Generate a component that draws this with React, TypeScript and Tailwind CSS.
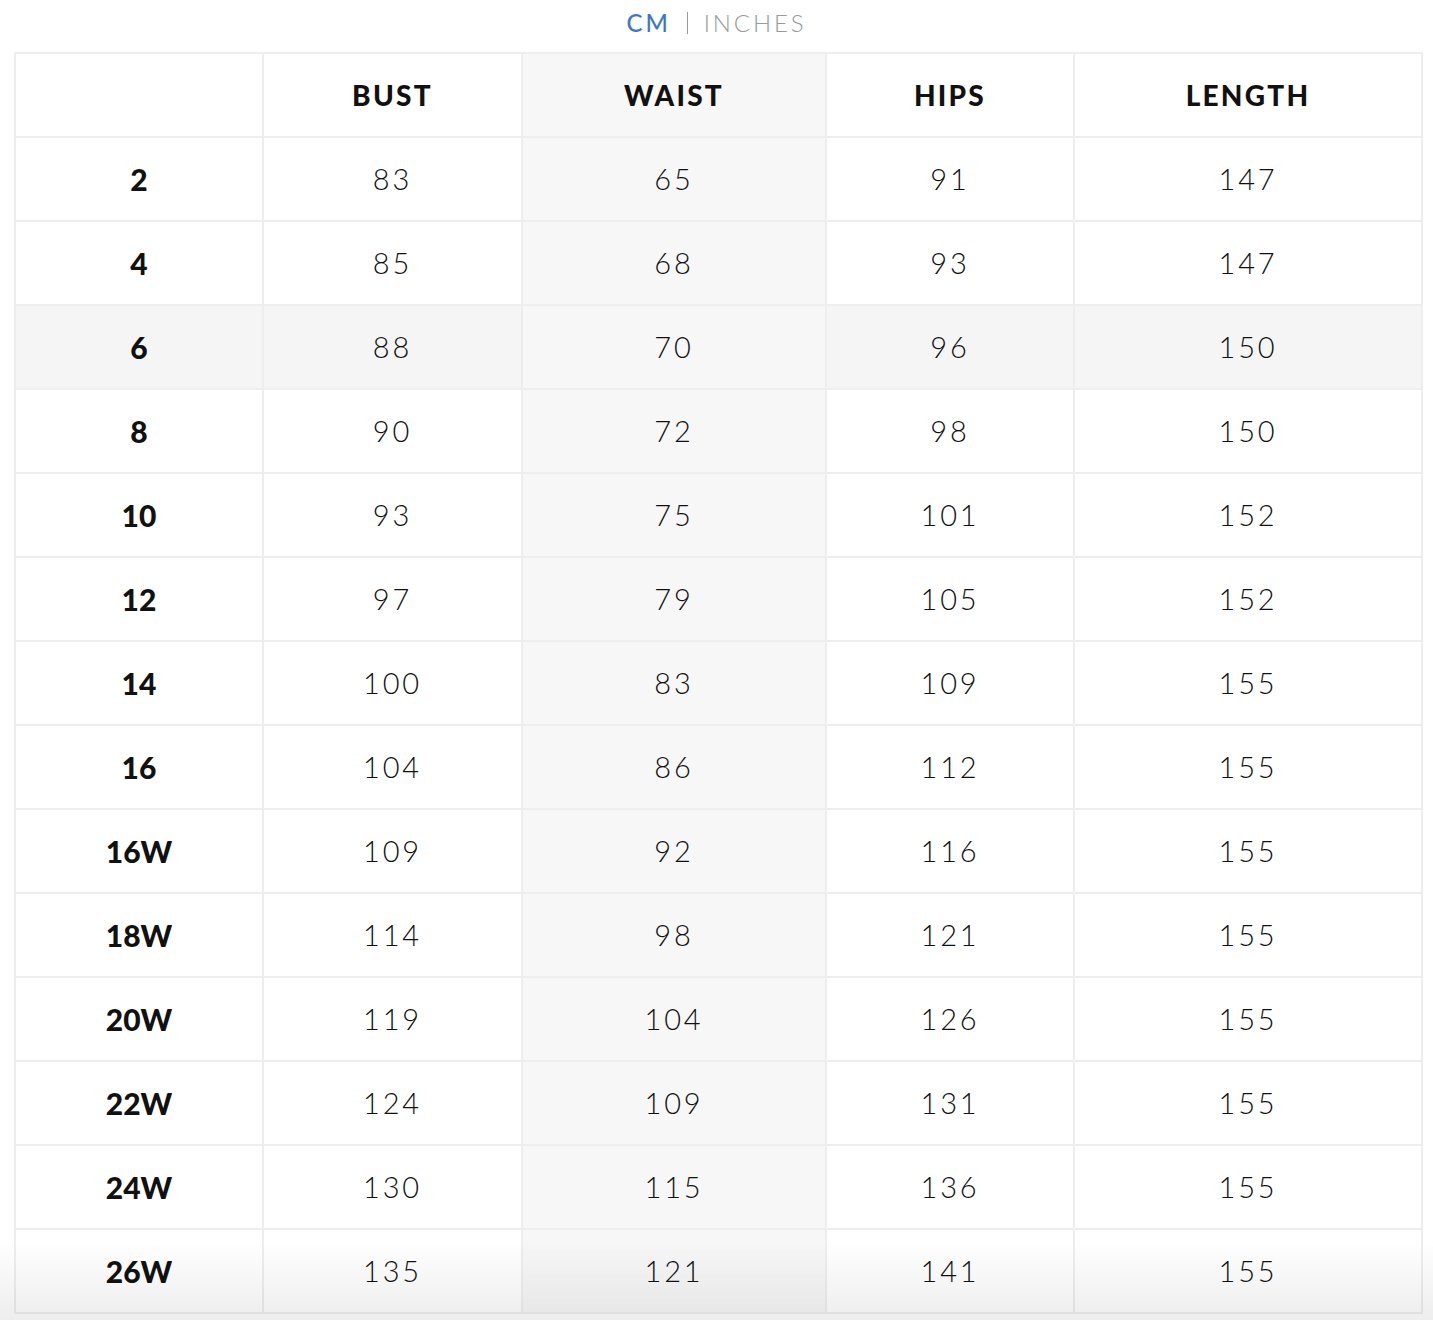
const columns = ['BUST', 'WAIST', 'HIPS', 'LENGTH']

const rows: [string, number, number, number, number][] = [
  ['2', 83, 65, 91, 147],
  ['4', 85, 68, 93, 147],
  ['6', 88, 70, 96, 150],
  ['8', 90, 72, 98, 150],
  ['10', 93, 75, 101, 152],
  ['12', 97, 79, 105, 152],
  ['14', 100, 83, 109, 155],
  ['16', 104, 86, 112, 155],
  ['16W', 109, 92, 116, 155],
  ['18W', 114, 98, 121, 155],
  ['20W', 119, 104, 126, 155],
  ['22W', 124, 109, 131, 155],
  ['24W', 130, 115, 136, 155],
  ['26W', 135, 121, 141, 155],
]

const widths = ['w-[248px]', 'w-[259px]', 'w-[304px]', 'w-[248px]', 'w-[348px]']

export default function App() {
  return (
    <div className="relative h-[1320px] w-[1433px] overflow-hidden bg-white font-['Lato',sans-serif] text-[#111]">
      <div className="flex h-[42px] items-center justify-center gap-4 pt-1 text-[24px] tracking-[0.12em]">
        <span className="font-medium text-[#3f78c0]">CM</span>
        <span className="h-[22px] w-px bg-[#9a9a9a]" />
        <span className="font-light text-[#9a9a9a]">INCHES</span>
      </div>

      <table className="ml-[14px] mt-[10px] table-fixed border-collapse">
        <colgroup>
          {widths.map((w, i) => (
            <col key={i} className={w} />
          ))}
        </colgroup>
        <thead>
          <tr className="h-[84px]">
            <th className="border-2 border-[#eeeeee]" />
            {columns.map((c) => (
              <th
                key={c}
                className={`border-2 border-[#eeeeee] text-[28px] font-black tracking-[0.08em] ${c === 'WAIST' ? 'bg-[#f7f7f7]' : ''}`}
              >
                {c}
              </th>
            ))}
          </tr>
        </thead>
        <tbody>
          {rows.map(([size, ...vals]) => (
            <tr key={size} className={`h-[84px] ${size === '6' ? 'bg-[#f5f5f5]' : ''}`}>
              <td className="border-2 border-[#eeeeee] text-center text-[30px] font-black">{size}</td>
              {vals.map((v, i) => (
                <td
                  key={i}
                  className={`border-2 border-[#eeeeee] text-center text-[29px] font-light tracking-[0.1em] ${i === 1 ? 'bg-[#f7f7f7]' : ''}`}
                >
                  {v}
                </td>
              ))}
            </tr>
          ))}
        </tbody>
      </table>

      <div className="pointer-events-none absolute bottom-0 left-0 h-[80px] w-full bg-gradient-to-b from-transparent to-[#00000012]" />
    </div>
  )
}
